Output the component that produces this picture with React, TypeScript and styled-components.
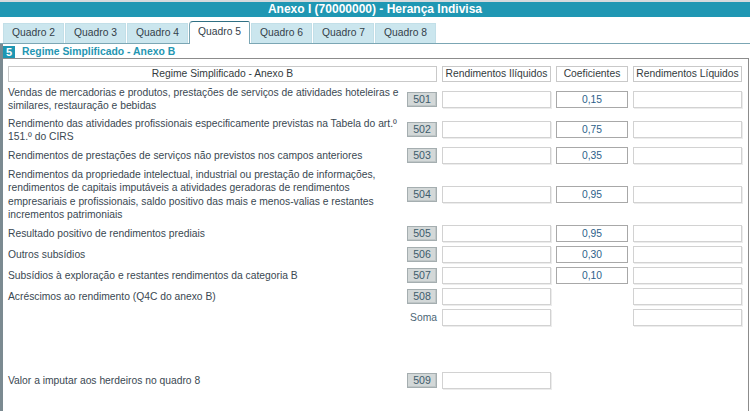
import styled, { createGlobalStyle } from "styled-components";

const COLORS = {
    TEAL: "#1f97b3",
    TAB_BG: "#cbe6ee",
    TEXT: "#3a4852",
    CODE_TEXT: "#3e5c6c",
    COEF_TEXT: "#2d5f8a",
    FIELD_BORDER: "#d2d2d2",
    BOX_BORDER: "#8c8c8c",
};

const GlobalStyle = createGlobalStyle`
    body {
        margin: 0;
        background: #ffffff;
        font-family: "Liberation Sans", Arial, sans-serif;
        color: ${COLORS.TEXT};
    }
`;

const Sframe = styled.div`
    width: 750px;
    border-top: 2px solid #d5dadd;
`;
const StitleBar = styled.div`
    height: 15px;
    line-height: 15px;
    background-color: ${COLORS.TEAL};
    color: #ffffff;
    font-size: 12px;
    font-weight: bold;
    text-align: center;
`;
const StabBar = styled.div`
    margin-top: 4px;
    height: 22px;
    padding-left: 3px;
    display: flex;
    align-items: flex-end;
    gap: 1px;
    border-bottom: 1px solid #7ba6b4;
`;
const Stab = styled.div<{ $active?: boolean }>`
    box-sizing: border-box;
    width: 61px;
    height: ${(p) => (p.$active ? "23px" : "20px")};
    margin-bottom: ${(p) => (p.$active ? "-1px" : "0")};
    padding-top: ${(p) => (p.$active ? "4px" : "3px")};
    background-color: ${(p) => (p.$active ? "#ffffff" : COLORS.TAB_BG)};
    border: 1px solid ${(p) => (p.$active ? "#7ba6b4" : "#c2dfe8")};
    border-top-color: ${(p) => (p.$active ? "#2f6f83" : "#c2dfe8")};
    border-bottom: none;
    border-radius: ${(p) => (p.$active ? "4px 2px 0 0" : "0")};
    font-size: 10.3px;
    text-align: center;
    color: #33404a;
`;
const Ssection = styled.div`
    width: 749px;
    border-left: 3px solid #7b8a91;
    box-sizing: border-box;
    min-height: 370px;
`;
const SsectionHeader = styled.div`
    height: 14px;
    display: flex;
    align-items: center;
    gap: 7px;
`;
const Sbadge = styled.span`
    width: 12px;
    height: 12px;
    margin-top: 2px;
    background-color: ${COLORS.TEAL};
    color: #ffffff;
    font-size: 11px;
    font-weight: bold;
    line-height: 12px;
    text-align: center;
`;
const SsectionTitle = styled.span`
    color: #2596b2;
    font-size: 10.4px;
    font-weight: bold;
    margin-top: 1px;
`;
const Sbox = styled.div`
    border-top: 1px solid ${COLORS.BOX_BORDER};
    border-right: 1px solid ${COLORS.BOX_BORDER};
    padding: 4px 0 30px 5px;
    min-height: 322px;
`;
const Srow = styled.div<{ $gapBefore?: number }>`
    display: grid;
    grid-template-columns: 394px 30px 109px 72px 109px;
    column-gap: 5px;
    align-items: center;
    padding: 2px 0;
    min-height: 17px;
    margin-top: ${(p) => p.$gapBefore ?? 0}px;
`;
const SheaderCell = styled.div<{ $span?: number }>`
    grid-column: span ${(p) => p.$span ?? 1};
    height: 14px;
    line-height: 14px;
    border: 1px solid #c9c9c9;
    font-size: 10.3px;
    text-align: center;
    color: #333b40;
    white-space: nowrap;
`;
const Sdesc = styled.div`
    font-size: 10.3px;
    line-height: 13.25px;
    color: ${COLORS.TEXT};
    padding-right: 2px;
`;
const Scode = styled.div`
    height: 13px;
    line-height: 13px;
    background-color: #d3d8d8;
    border: 1px solid #a5aeb0;
    box-shadow: inset -1px -1px 0 #bfc6c7;
    font-size: 10.6px;
    text-align: center;
    color: ${COLORS.CODE_TEXT};
`;
const Slabel = styled.div`
    font-size: 10.3px;
    text-align: right;
    color: #4b6676;
`;
const Sfield = styled.div<{ $coef?: boolean }>`
    height: 15px;
    line-height: 15px;
    background-color: #ffffff;
    border: 1px solid ${(p) => (p.$coef ? "#a8a8a8" : COLORS.FIELD_BORDER)};
    box-shadow: ${(p) => (p.$coef ? "none" : "1px 1px 0 #ececec")};
    font-size: 10.3px;
    text-align: center;
    color: ${COLORS.COEF_TEXT};
`;

type Line = {
    code: string;
    text: string;
    coef?: string;
};

const LINES: Line[] = [
    { code: "501", text: "Vendas de mercadorias e produtos, prestações de serviços de atividades hoteleiras e similares, restauração e bebidas", coef: "0,15" },
    { code: "502", text: "Rendimento das atividades profissionais especificamente previstas na Tabela do art.º 151.º do CIRS", coef: "0,75" },
    { code: "503", text: "Rendimentos de prestações de serviços não previstos nos campos anteriores", coef: "0,35" },
    { code: "504", text: "Rendimentos da propriedade intelectual, industrial ou prestação de informações, rendimentos de capitais imputáveis a atividades geradoras de rendimentos empresariais e profissionais, saldo positivo das mais e menos-valias e restantes incrementos patrimoniais", coef: "0,95" },
    { code: "505", text: "Resultado positivo de rendimentos prediais", coef: "0,95" },
    { code: "506", text: "Outros subsídios", coef: "0,30" },
    { code: "507", text: "Subsídios à exploração e restantes rendimentos da categoria B", coef: "0,10" },
    { code: "508", text: "Acréscimos ao rendimento (Q4C do anexo B)" },
];

const TABS = ["Quadro 2", "Quadro 3", "Quadro 4", "Quadro 5", "Quadro 6", "Quadro 7", "Quadro 8"];

const App = () => {
    return (
        <>
            <GlobalStyle />
            <Sframe>
                <StitleBar>Anexo I (70000000) - Herança Indivisa</StitleBar>
                <StabBar>
                    {TABS.map((tab) => (
                        <Stab key={tab} $active={tab === "Quadro 5"}>{tab}</Stab>
                    ))}
                </StabBar>
                <Ssection>
                    <SsectionHeader>
                        <Sbadge>5</Sbadge>
                        <SsectionTitle>Regime Simplificado - Anexo B</SsectionTitle>
                    </SsectionHeader>
                    <Sbox>
                        <Srow>
                            <SheaderCell $span={2}>Regime Simplificado - Anexo B</SheaderCell>
                            <SheaderCell>Rendimentos Ilíquidos</SheaderCell>
                            <SheaderCell>Coeficientes</SheaderCell>
                            <SheaderCell>Rendimentos Líquidos</SheaderCell>
                        </Srow>
                        {LINES.map((line) => (
                            <Srow key={line.code}>
                                <Sdesc>{line.text}</Sdesc>
                                <Scode>{line.code}</Scode>
                                <Sfield />
                                {line.coef ? <Sfield $coef>{line.coef}</Sfield> : <div />}
                                <Sfield />
                            </Srow>
                        ))}
                        <Srow>
                            <div />
                            <Slabel>Soma</Slabel>
                            <Sfield />
                            <div />
                            <Sfield />
                        </Srow>
                        <Srow $gapBefore={42}>
                            <Sdesc>Valor a imputar aos herdeiros no quadro 8</Sdesc>
                            <Scode>509</Scode>
                            <Sfield />
                        </Srow>
                    </Sbox>
                </Ssection>
            </Sframe>
        </>
    );
};

export default App;
